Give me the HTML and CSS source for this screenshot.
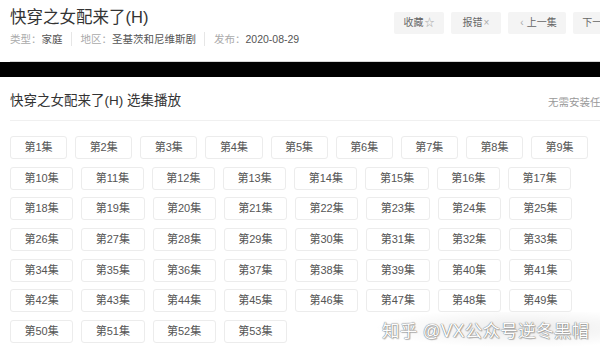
FILE: index.html
```html
<!DOCTYPE html>
<html lang="zh-CN">
<head>
<meta charset="utf-8">
<title>快穿之女配来了(H)</title>
<link rel="stylesheet" href="styles.css">
</head>
<body>
<div class="page">
  <header class="head">
    <div class="info">
      <h1 class="title">快穿之女配来了(H)</h1>
      <div class="meta">
        <span class="lbl">类型：</span><span class="val">家庭</span>
        <span class="sep"></span>
        <span class="lbl">地区：</span><span class="val">圣基茨和尼维斯剧</span>
        <span class="sep"></span>
        <span class="lbl">发布：</span><span class="val">2020-08-29</span>
      </div>
    </div>
    <div class="actions">
      <span class="act">收藏<span class="ico">☆</span></span>
      <span class="act">报错<span class="ico">×</span></span>
      <span class="act wide"><span class="arr">‹</span>上一集</span>
      <span class="act wide">下一集<span class="arr">›</span></span>
    </div>
  </header>
</div>
<div class="bar"></div>
<div class="page">
  <div class="sec-head">
    <h2 class="sec-title">快穿之女配来了(H) 选集播放</h2>
    <span class="tip">无需安装任何插件，即可快速播放</span>
  </div>
  <div class="eps">
    <a class="ep">第1集</a><a class="ep">第2集</a><a class="ep">第3集</a><a class="ep">第4集</a><a class="ep">第5集</a><a class="ep">第6集</a><a class="ep">第7集</a><a class="ep">第8集</a><a class="ep">第9集</a>
    <a class="ep">第10集</a><a class="ep">第11集</a><a class="ep">第12集</a><a class="ep">第13集</a><a class="ep">第14集</a><a class="ep">第15集</a><a class="ep">第16集</a><a class="ep">第17集</a>
    <a class="ep">第18集</a><a class="ep">第19集</a><a class="ep">第20集</a><a class="ep">第21集</a><a class="ep">第22集</a><a class="ep">第23集</a><a class="ep">第24集</a><a class="ep">第25集</a>
    <a class="ep">第26集</a><a class="ep">第27集</a><a class="ep">第28集</a><a class="ep">第29集</a><a class="ep">第30集</a><a class="ep">第31集</a><a class="ep">第32集</a><a class="ep">第33集</a>
    <a class="ep">第34集</a><a class="ep">第35集</a><a class="ep">第36集</a><a class="ep">第37集</a><a class="ep">第38集</a><a class="ep">第39集</a><a class="ep">第40集</a><a class="ep">第41集</a>
    <a class="ep">第42集</a><a class="ep">第43集</a><a class="ep">第44集</a><a class="ep">第45集</a><a class="ep">第46集</a><a class="ep">第47集</a><a class="ep">第48集</a><a class="ep">第49集</a>
    <a class="ep">第50集</a><a class="ep">第51集</a><a class="ep">第52集</a><a class="ep">第53集</a>
  </div>
</div>
<div class="watermark">知乎 @VX公众号逆冬黑帽</div>
</body>
</html>
```
FILE: styles.css
```css
html, body {
  margin: 0;
  padding: 0;
  background: #fff;
  overflow: hidden;
  width: 600px;
  height: 357px;
}
body {
  font-family: "Liberation Sans", "Noto Sans CJK SC", sans-serif;
  color: #333;
  position: relative;
}
.page {
  margin-left: 10px;
  width: 621px;
}
.head {
  display: flex;
  align-items: flex-start;
  padding-top: 5px;
  height: 56px;
  border-bottom: 1px solid #d6d6d6;
}
.title {
  margin: 0;
  font-size: 16.5px;
  font-weight: normal;
  line-height: 24px;
  color: #333;
}
.meta {
  margin-top: 2px;
  display: flex;
  align-items: center;
  font-size: 10.5px;
  line-height: 16px;
  white-space: nowrap;
}
.lbl { color: #aaa; }
.val { color: #555; }
.sep {
  width: 1px;
  height: 14px;
  background: #e6e6e6;
  margin: 0 9px 0 8px;
}
.actions {
  margin-left: auto;
  margin-top: 7px;
  display: flex;
  gap: 7px;
}
.act {
  height: 22px;
  line-height: 22px;
  width: 50px;
  text-align: center;
  font-size: 10px;
  color: #666;
  background: #f4f4f4;
  border-radius: 2px;
}
.act.wide { width: 58px; }
.ico { color: #aaa; margin-left: 1px; }
.arr { color: #aaa; margin: 0 3px; }
.bar {
  height: 15px;
  background: #000;
}
.sec-head {
  display: flex;
  align-items: center;
  justify-content: space-between;
  padding: 14px 0 9px;
  border-bottom: 1px solid #f0f0f0;
  width: 590px;
}
.sec-title {
  margin: 0;
  font-size: 13.5px;
  font-weight: normal;
  line-height: 20px;
  color: #333;
}
.tip {
  flex: 0 0 52px;
  overflow: hidden;
  white-space: nowrap;
  font-size: 10.5px;
  color: #999;
}
.eps {
  margin-top: 15px;
  display: flex;
  flex-wrap: wrap;
  column-gap: 8px;
  row-gap: 7.7px;
}
.ep {
  box-sizing: border-box;
  height: 23px;
  line-height: 21px;
  padding: 0 13.5px;
  border: 1px solid #ececec;
  border-radius: 3px;
  font-size: 11px;
  color: #555;
  white-space: nowrap;
}
.watermark {
  position: absolute;
  left: 372px;
  top: 312px;
  padding: 8px 14px 6px 10px;
  font-size: 17.5px;
  line-height: 22px;
  color: #fdfdfd;
  letter-spacing: 0.3px;
  white-space: nowrap;
  text-shadow: 0 0 1px #777, 0 0 1px #777, 1px 1px 1px rgba(0,0,0,0.25);
  background: radial-gradient(ellipse at 65% 45%, rgba(0,0,0,0.08), rgba(0,0,0,0) 70%);
}
```
